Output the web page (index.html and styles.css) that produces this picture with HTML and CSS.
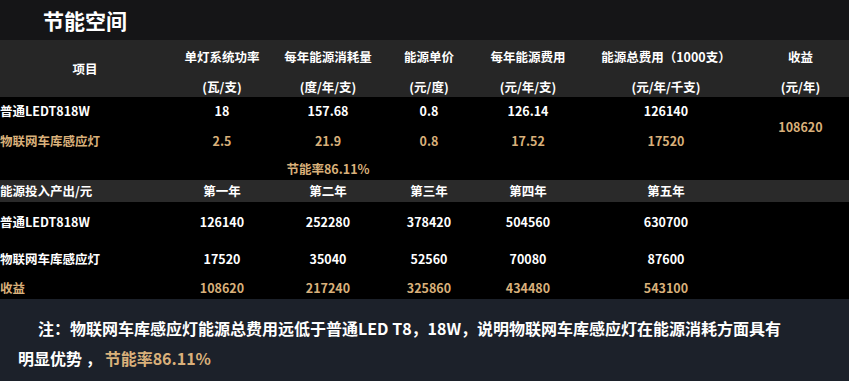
FILE: index.html
```html
<!DOCTYPE html>
<html lang="zh-CN">
<head>
    <meta charset="UTF-8">
    <title>节能空间</title>
    <link rel="stylesheet" href="styles.css">
</head>
<body>

<div class="page-title">节能空间</div>

<table class="energy-table">
    <colgroup>
        <col class="c-label">
        <col class="c1">
        <col class="c2">
        <col class="c3">
        <col class="c4">
        <col class="c5">
        <col class="c6">
    </colgroup>
    <tr class="head-row">
        <th class="center">项目</th>
        <th><div class="two-line"><span>单灯系统功率</span><span>(瓦/支)</span></div></th>
        <th><div class="two-line"><span>每年能源消耗量</span><span>(度/年/支)</span></div></th>
        <th><div class="two-line"><span>能源单价</span><span>(元/度)</span></div></th>
        <th><div class="two-line"><span>每年能源费用</span><span>(元/年/支)</span></div></th>
        <th><div class="two-line"><span>能源总费用（1000支）</span><span>(元/年/千支)</span></div></th>
        <th><div class="two-line"><span>收益</span><span>(元/年)</span></div></th>
    </tr>
    <tr class="row-a">
        <td class="label">普通LEDT818W</td>
        <td>18</td>
        <td>157.68</td>
        <td>0.8</td>
        <td>126.14</td>
        <td>126140</td>
        <td rowspan="2" class="gold">108620</td>
    </tr>
    <tr class="row-b gold">
        <td class="label">物联网车库感应灯</td>
        <td>2.5</td>
        <td>21.9</td>
        <td>0.8</td>
        <td>17.52</td>
        <td>17520</td>
    </tr>
    <tr class="row-rate">
        <td></td>
        <td></td>
        <td class="gold">节能率86.11%</td>
        <td></td>
        <td></td>
        <td></td>
        <td></td>
    </tr>
    <tr class="sub-head">
        <td class="label">能源投入产出/元</td>
        <td>第一年</td>
        <td>第二年</td>
        <td>第三年</td>
        <td>第四年</td>
        <td>第五年</td>
        <td></td>
    </tr>
    <tr class="row-c">
        <td class="label">普通LEDT818W</td>
        <td>126140</td>
        <td>252280</td>
        <td>378420</td>
        <td>504560</td>
        <td>630700</td>
        <td></td>
    </tr>
    <tr class="row-d">
        <td class="label">物联网车库感应灯</td>
        <td>17520</td>
        <td>35040</td>
        <td>52560</td>
        <td>70080</td>
        <td>87600</td>
        <td></td>
    </tr>
    <tr class="row-e gold">
        <td class="label">收益</td>
        <td>108620</td>
        <td>217240</td>
        <td>325860</td>
        <td>434480</td>
        <td>543100</td>
        <td></td>
    </tr>
</table>

<div class="note">
    <p>注：物联网车库感应灯能源总费用远低于普通LED T8，18W，说明物联网车库感应灯在能源消耗方面具有明显优势 ，<span class="gold rate">节能率86.11%</span></p>
</div>

</body>
</html>
```

FILE: styles.css
```css
body {
    margin: 0;
    background: #000;
    color: #fff;
    font-family: "Noto Sans CJK SC", "Noto Sans", sans-serif;
    width: 849px;
    height: 381px;
    overflow: hidden;
}

.page-title {
    height: 40px;
    line-height: 40px;
    padding-left: 43px;
    background: #151517;
    font-size: 21px;
    font-weight: bold;
}

.energy-table {
    width: 849px;
    border-collapse: collapse;
    table-layout: fixed;
    font-size: 12.5px;
    font-weight: bold;
}

.c-label { width: 170px; }
.c1 { width: 104px; }
.c2 { width: 108px; }
.c3 { width: 94px; }
.c4 { width: 104px; }
.c5 { width: 172px; }
.c6 { width: 97px; }

.energy-table th,
.energy-table td {
    padding: 0;
    text-align: center;
    vertical-align: middle;
    white-space: nowrap;
    line-height: 16px;
}

.energy-table .label {
    text-align: left;
}

.head-row {
    background: #262626;
    height: 57px;
}

.two-line {
    display: flex;
    flex-direction: column;
    align-items: center;
    gap: 14px;
    padding: 9px 0 2px;
}

.row-a { height: 28px; }
.row-b { height: 32px; }
.row-rate { height: 23px; }

.sub-head {
    background: #2a2a2a;
    height: 22px;
}

.row-c { height: 40px; }
.row-d { height: 34px; }
.row-e { height: 23px; }

.gold {
    color: #d9b07a;
}

.note {
    background: #1c212a;
    padding: 14px 58px 20px 18px;
    font-size: 16px;
    font-weight: bold;
    line-height: 30px;
}

.note p {
    margin: 0;
    text-indent: 20px;
}

.note .rate {
    margin-left: 3px;
}
```
